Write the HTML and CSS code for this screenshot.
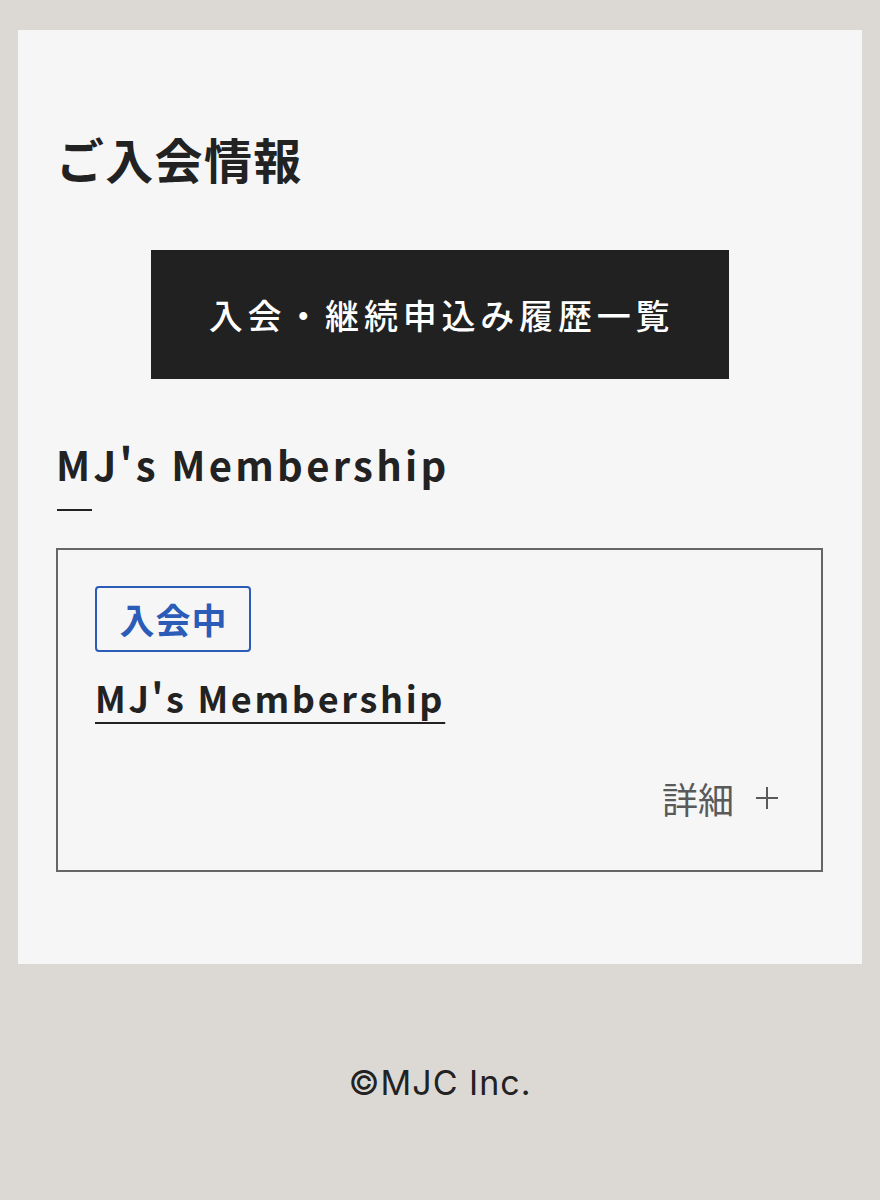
FILE: index.html
```html
<!DOCTYPE html>
<html lang="ja">
<head>
<meta charset="utf-8">
<title>ご入会情報</title>
<link rel="stylesheet" href="styles.css">
</head>
<body>
<main class="panel">
  <h1 class="page-title">ご入会情報</h1>
  <div class="history-wrap">
    <a class="history-btn" href="#">入会・継続申込み履歴一覧</a>
  </div>
  <h2 class="section-title">MJ's Membership</h2>
  <div class="section-rule"></div>
  <section class="member-card">
    <span class="status-badge">入会中</span>
    <div class="card-title-row"><a class="card-title" href="#">MJ's Membership</a></div>
    <div class="detail-row">
      <span class="detail-label">詳細</span>
      <svg class="detail-plus" width="22" height="22" viewBox="0 0 22 22" aria-hidden="true">
        <path d="M11 0V22M0 11H22" stroke="#5a5a5a" stroke-width="2" fill="none"/>
      </svg>
    </div>
  </section>
</main>
<footer class="footer">©MJC Inc.</footer>
</body>
</html>
```

FILE: styles.css
```css
html, body {
  margin: 0;
  padding: 0;
}
body {
  background: #dcd9d5;
  font-family: "Noto Sans CJK JP", "Noto Sans", sans-serif;
  color: #222;
  min-height: 1200px;
}
.panel {
  margin: 30px 18px 0;
  background: #f6f6f7;
  padding: 100px 39px 92px 38px;
}
.page-title {
  margin: 0;
  font-size: 48px;
  line-height: 1.2;
  font-weight: 700;
  letter-spacing: 1.3px;
  color: #222;
}
.history-wrap {
  display: flex;
  justify-content: center;
  margin-top: 62px;
}
.history-btn {
  display: flex;
  align-items: center;
  justify-content: center;
  width: 578px;
  height: 129px;
  background: #212121;
  color: #fff;
  text-decoration: none;
  font-size: 34px;
  font-weight: 500;
  letter-spacing: 4.8px;
  padding-left: 4px;
  box-sizing: border-box;
}
.section-title {
  margin: 61px 0 0;
  font-size: 40px;
  line-height: 1.2;
  font-weight: 700;
  letter-spacing: 3.3px;
  color: #222;
}
.section-rule {
  width: 35px;
  height: 2px;
  background: #222;
  margin: 21px 0 0 1px;
}
.member-card {
  margin-top: 37px;
  border: 2px solid #666;
  padding: 36px 43px 45px 37px;
}
.status-badge {
  display: inline-flex;
  align-items: center;
  justify-content: center;
  box-sizing: border-box;
  width: 156px;
  height: 66px;
  border: 2px solid #2b5cb8;
  border-radius: 4px;
  color: #2b5cb8;
  font-size: 35px;
  font-weight: 700;
  letter-spacing: 1px;
  padding-left: 1px;
}
.card-title-row {
  margin-top: 24px;
}
.card-title {
  font-size: 36px;
  line-height: 1.2;
  font-weight: 700;
  letter-spacing: 2.7px;
  color: #222;
  text-decoration: underline;
  text-decoration-thickness: 2px;
  text-underline-offset: 9px;
}
.detail-row {
  margin-top: 52px;
  display: flex;
  justify-content: flex-end;
  align-items: center;
  gap: 22px;
  color: #5a5a5a;
  font-size: 36px;
  line-height: 1.5;
}
.detail-plus {
  display: block;
}
.footer {
  margin-top: 99px;
  text-align: center;
  font-family: Inter, "Open Sans", sans-serif;
  font-size: 34px;
  line-height: 1.2;
  font-weight: 400;
  letter-spacing: 1px;
  color: #222;
}
```
